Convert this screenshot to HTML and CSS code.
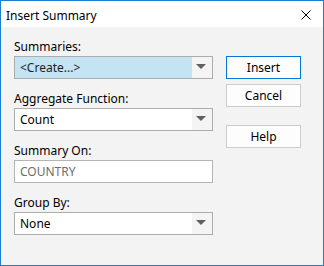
FILE: index.html
```html
<!DOCTYPE html>
<html lang="en">
<head>
    <meta charset="UTF-8">
    <title>Insert Summary</title>
    <link rel="stylesheet" href="styles.css">
</head>
<body>
    <div class="dialog">
        <header class="title-bar">
            <span class="title">Insert Summary</span>
            <button type="button" class="close-btn" aria-label="Close">
                <svg width="10" height="10" viewBox="0 0 10 10">
                    <path d="M0.5 0.5 L9.5 9.5 M9.5 0.5 L0.5 9.5" stroke="#000" stroke-width="1" fill="none"/>
                </svg>
            </button>
        </header>
        <main class="content">
            <div class="fields">
                <div class="field">
                    <label class="field-label">Summaries:</label>
                    <div class="combo">
                        <span class="combo-value selected">&lt;Create...&gt;</span>
                        <span class="combo-arrow"></span>
                    </div>
                </div>
                <div class="field">
                    <label class="field-label">Aggregate Function:</label>
                    <div class="combo">
                        <span class="combo-value">Count</span>
                        <span class="combo-arrow"></span>
                    </div>
                </div>
                <div class="field">
                    <label class="field-label">Summary On:</label>
                    <div class="textbox">COUNTRY</div>
                </div>
                <div class="field">
                    <label class="field-label">Group By:</label>
                    <div class="combo">
                        <span class="combo-value">None</span>
                        <span class="combo-arrow"></span>
                    </div>
                </div>
            </div>
            <div class="actions">
                <button type="button" class="btn default">Insert</button>
                <button type="button" class="btn">Cancel</button>
                <button type="button" class="btn help">Help</button>
            </div>
        </main>
    </div>
</body>
</html>
```

FILE: styles.css
```css
body {
    margin: 0;
    padding: 0;
    font-family: 'Noto Sans', sans-serif;
    font-size: 12px;
    color: #000;
    background-color: #fff;
}
.dialog {
    width: 324px;
    height: 266px;
    box-sizing: border-box;
    border: 1px solid #1a7fd4;
    background-color: #f3f3f3;
    display: flex;
    flex-direction: column;
}
.title-bar {
    height: 26px;
    background-color: #fff;
    display: flex;
    align-items: center;
    justify-content: space-between;
    padding: 0 12px 0 5px;
}
.title {
    font-size: 12px;
    line-height: 16px;
    padding-top: 3px;
}
.close-btn {
    border: none;
    background: none;
    padding: 0;
    width: 10px;
    height: 10px;
    display: flex;
    margin-top: 1px;
}
.content {
    display: flex;
    padding: 12px 0 0 13px;
}
.fields {
    width: 199px;
}
.field {
    margin-bottom: 12px;
}
.field-label {
    display: block;
    line-height: 16px;
    margin-bottom: 1px;
}
.combo {
    height: 23px;
    box-sizing: border-box;
    border: 1px solid #acacac;
    background-color: #fff;
    display: flex;
}
.combo-value {
    flex: 1;
    padding-left: 5px;
    line-height: 21px;
}
.combo-value.selected {
    background-color: #c4e3f3;
    color: #1e1e1e;
}
.combo-arrow {
    width: 20px;
    background-color: #f4f4f4;
    position: relative;
}
.combo-arrow::after {
    content: "";
    position: absolute;
    left: 4px;
    top: 7px;
    border-left: 5px solid transparent;
    border-right: 5px solid transparent;
    border-top: 5px solid #606060;
}
.textbox {
    height: 23px;
    box-sizing: border-box;
    border: 1px solid #b4b4b4;
    background-color: #fff;
    color: #6d6d6d;
    padding-left: 5px;
    line-height: 21px;
}
.actions {
    display: flex;
    flex-direction: column;
    gap: 5px;
    margin-left: 13px;
    padding-top: 17px;
}
.btn {
    width: 75px;
    height: 23px;
    box-sizing: border-box;
    border: 1px solid #cccccc;
    background-color: #fdfdfd;
    font-family: 'Noto Sans', sans-serif;
    font-size: 12px;
    color: #000;
    padding: 0;
}
.btn.default {
    border-color: #0078d7;
}
.btn.help {
    margin-top: 13px;
}
```
